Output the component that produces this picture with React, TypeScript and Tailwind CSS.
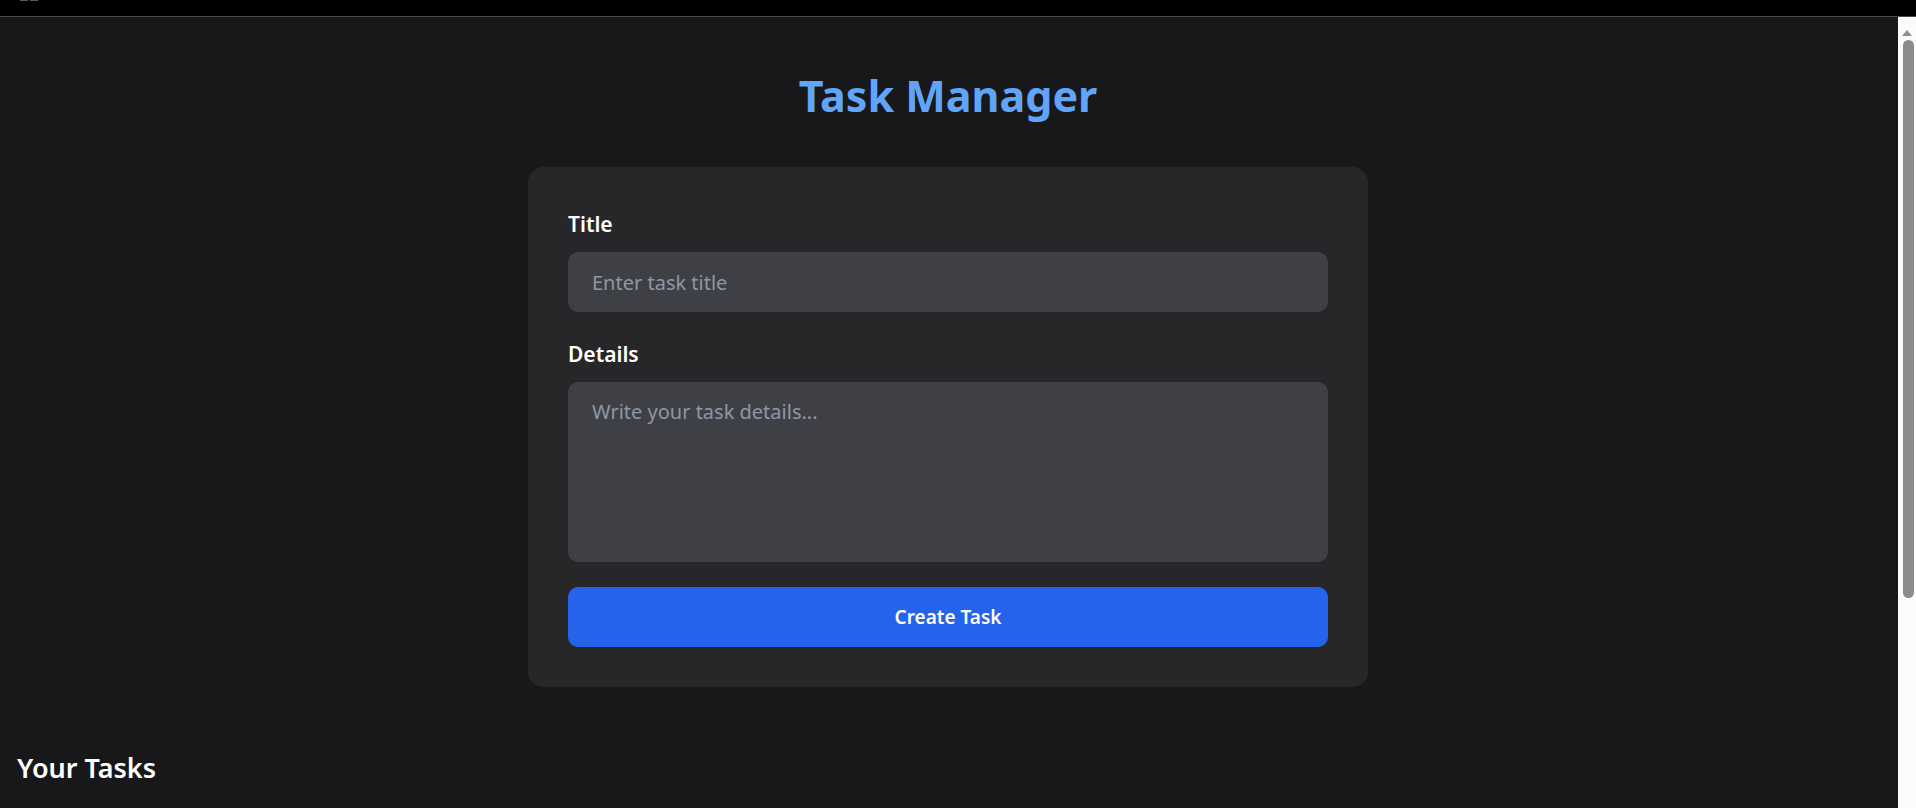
import { useState } from "react"

const font = { fontFamily: '"Segoe UI", "Noto Sans", "Open Sans", sans-serif' }

function FakeScrollbar() {
  return (
    <div className="w-[18px] shrink-0 bg-[#fbfbfb] flex flex-col items-center">
      <svg width="18" height="17" viewBox="0 0 18 17" className="mt-[6px] shrink-0">
        <path d="M4 13 L9 7 L14 13 Z" fill="#8f8f8f" />
      </svg>
      <div className="w-[11px] h-[558px] ml-[3px] rounded-full bg-[#8c8c8c]"></div>
    </div>
  )
}

export default function App() {
  const [title, setTitle] = useState("")
  const [details, setDetails] = useState("")

  return (
    <div className="w-[1916px] h-[808px] overflow-hidden bg-black flex flex-col" style={font}>
      {/* browser top strip */}
      <div className="h-[17px] shrink-0 bg-black border-b border-[#4a4a4a] flex items-start">
        <div className="ml-[20px] flex gap-[2px]">
          <div className="w-[8px] h-[1px] bg-[#5a5a5a]"></div>
          <div className="w-[8px] h-[1px] bg-[#5a5a5a]"></div>
        </div>
      </div>

      <div className="flex flex-1 min-h-0">
        <main className="flex-1 bg-[#18181b] overflow-hidden pr-[2px]">
          <h1 className="pt-[54px] text-center text-[43px] leading-[50px] font-bold text-[#60a5fa]">
            Task Manager
          </h1>

          <form
            className="mx-auto mt-[46px] w-[840px] rounded-[15px] bg-[#27272a] p-[40px] flex flex-col"
            onSubmit={(e) => e.preventDefault()}
          >
            <label className="text-[21px] leading-[35px] font-semibold text-white mb-[10px]">Title</label>
            <input
              value={title}
              onChange={(e) => setTitle(e.target.value)}
              placeholder="Enter task title"
              className="h-[60px] rounded-[10px] bg-[#3f3f46] px-[24px] text-[20px] text-white outline-none placeholder:text-[#8e97a7]"
            />

            <label className="mt-[25px] text-[21px] leading-[35px] font-semibold text-white mb-[10px]">Details</label>
            <textarea
              value={details}
              onChange={(e) => setDetails(e.target.value)}
              placeholder="Write your task details..."
              className="h-[180px] resize-none rounded-[10px] bg-[#3f3f46] px-[24px] py-[15px] text-[20px] leading-[30px] text-white outline-none placeholder:text-[#8e97a7]"
            />

            <button
              type="submit"
              className="mt-[25px] h-[60px] rounded-[10px] bg-[#2563eb] text-[19px] font-semibold text-white"
            >
              Create Task
            </button>
          </form>

          <h2 className="mt-[61px] pl-[17px] text-[27px] leading-[40px] font-semibold text-white">Your Tasks</h2>
        </main>
        <FakeScrollbar />
      </div>
    </div>
  )
}
